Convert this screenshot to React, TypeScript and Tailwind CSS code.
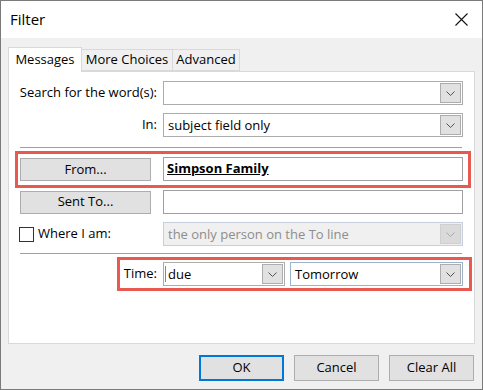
import React from "react";

const font = { fontFamily: '"Open Sans", "Noto Sans", sans-serif' };

function Chevron({ disabled }: { disabled?: boolean }) {
  return (
    <svg width="9" height="5" viewBox="0 0 9 5" fill="none">
      <path d="M0.5 0.5 L4.5 4.5 L8.5 0.5" stroke={disabled ? "#a8a8a8" : "#505050"} strokeWidth="1" />
    </svg>
  );
}

function Combo({
  value,
  className = "",
  disabled,
  focused,
}: {
  value: string;
  className?: string;
  disabled?: boolean;
  focused?: boolean;
}) {
  return (
    <div
      className={`flex h-[24px] items-center border ${
        disabled
          ? "border-[#c5d0dc] bg-[#f0f0f0] text-[#8d8d8d]"
          : focused
          ? "border-[#9bb3cb] bg-white text-black"
          : "border-[#acacac] bg-white text-black"
      } ${className}`}
    >
      <span className="flex-1 truncate pl-[4px] leading-[20px]">{value}</span>
      <div
        className={`mr-px flex h-[20px] w-[21px] shrink-0 items-center justify-center border ${
          disabled ? "border-[#cfcfcf] bg-[#dadada]" : "border-[#adadad] bg-[#e1e1e1]"
        }`}
      >
        <Chevron disabled={disabled} />
      </div>
    </div>
  );
}

function Label({ children }: { children: React.ReactNode }) {
  return (
    <div className="flex w-[137px] shrink-0 justify-end">
      <span className="shrink-0 whitespace-nowrap">{children}</span>
    </div>
  );
}

function Btn({ children, className = "" }: { children: React.ReactNode; className?: string }) {
  return (
    <button
      className={`flex items-center justify-center border border-[#adadad] bg-[#e1e1e1] text-black ${className}`}
    >
      {children}
    </button>
  );
}

export default function App() {
  return (
    <div
      style={font}
      className="flex h-[390px] w-[483px] flex-col border border-[#7a7a7a] bg-[#f0f0f0] text-[13px] text-black"
    >
      {/* title bar */}
      <div className="flex h-[37px] items-center justify-between bg-white pl-[9px] pr-[14px]">
        <span className="text-[15px]">Filter</span>
        <svg width="13" height="13" viewBox="0 0 13 13">
          <path d="M0.5 0.5 L12.5 12.5 M12.5 0.5 L0.5 12.5" stroke="#111" strokeWidth="1.1" />
        </svg>
      </div>

      <div className="flex flex-1 flex-col px-[7px] pt-[8px]">
        {/* tabs */}
        <div className="relative z-10 flex h-[25px] items-end">
          <div className="-mb-px flex h-[25px] w-[74px] items-start justify-center border border-b-0 border-[#d9d9d9] bg-white pt-[2px]">
            Messages
          </div>
          <div className="flex h-[22px] w-[91px] items-center justify-center border border-l-0 border-[#d9d9d9] bg-[#f0f0f0]">
            More Choices
          </div>
          <div className="flex h-[22px] w-[67px] items-center justify-center border border-l-0 border-[#d9d9d9] bg-[#f0f0f0]">
            Advanced
          </div>
        </div>

        {/* panel */}
        <div className="relative flex h-[273px] flex-col border border-[#d9d9d9] bg-white pl-[11px] pr-[8px] pt-[9px]">
          <div className="flex h-[24px] items-center">
            <Label>Search for the word(s):</Label>
            <Combo value="" className="ml-[6px] w-[300px]" />
          </div>
          <div className="mt-[8px] flex h-[24px] items-center">
            <Label>In:</Label>
            <Combo value="subject field only" className="ml-[6px] w-[300px]" />
          </div>

          <div className="mt-[10px] h-px w-[442px] bg-[#a0a0a0]" />

          <div className="mt-[9px] flex h-[24px] items-center">
            <Btn className="h-[23px] w-[131px] self-end">From...</Btn>
            <div className="ml-[12px] flex h-[24px] w-[300px] items-center border border-[#a0a0a0] pl-[3px]">
              <span className="font-bold underline">Simpson Family</span>
            </div>
          </div>

          <div className="mt-[9px] flex h-[24px] items-center">
            <Btn className="h-[23px] w-[131px]">Sent To...</Btn>
            <div className="ml-[12px] h-[24px] w-[300px] border border-[#a0a0a0]" />
          </div>

          <div className="mt-[8px] flex h-[24px] items-center">
            <div className="flex w-[143px] items-center">
              <div className="-ml-px h-[15px] w-[15px] border border-[#333] bg-white" />
              <span className="ml-[4px]">Where I am:</span>
            </div>
            <Combo value="the only person on the To line" disabled className="w-[300px]" />
          </div>

          <div className="mt-[7px] h-px w-[442px] bg-[#a0a0a0]" />

          <div className="mt-[8px] flex h-[24px] items-center">
            <Label>Time:</Label>
            <div className="relative ml-[6px]">
              <Combo value="due" className="w-[122px]" />
              <div className="absolute left-[2px] top-[4px] h-[16px] w-px bg-[#6a8fb5]" />
            </div>
            <Combo value="Tomorrow" focused className="ml-[5px] w-[173px]" />
          </div>

          {/* highlight boxes */}
          <div className="pointer-events-none absolute left-[6px] top-[79px] h-[37px] w-[456px] border-[3px] border-[#e85a4f]" />
          <div className="pointer-events-none absolute left-[108px] top-[185px] h-[34px] w-[355px] border-[3px] border-[#e85a4f]" />
        </div>

        {/* footer buttons */}
        <div className="mt-[11px] flex justify-end gap-[10px] pr-[1px]">
          <button className="flex h-[26px] w-[85px] items-center justify-center border-2 border-[#0078d7] bg-[#e1e1e1]">
            OK
          </button>
          <Btn className="h-[26px] w-[85px]">Cancel</Btn>
          <Btn className="h-[26px] w-[85px]">Clear All</Btn>
        </div>
      </div>
    </div>
  );
}
